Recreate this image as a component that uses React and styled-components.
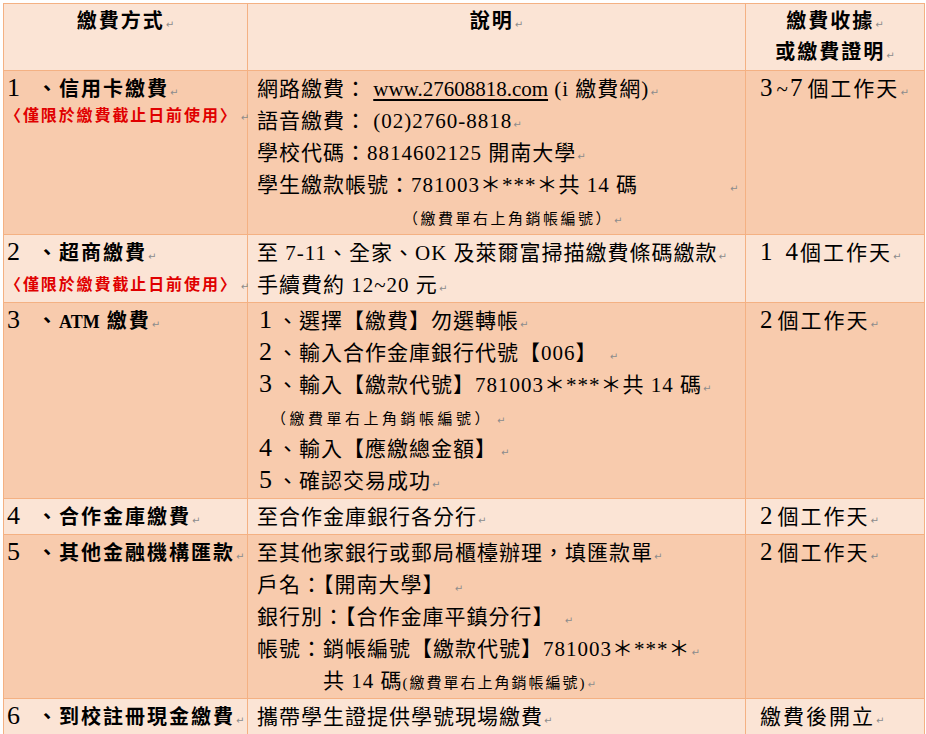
import React from "react";
import styled, { createGlobalStyle } from "styled-components";

const PALETTE = {
  BORDER: "#F4B183",
  LIGHT: "#FBE4D5",
  DARK: "#F8CBAD",
  RED: "#E00000",
  MARK: "#8c8c8c",
};

const GlobalStyle = createGlobalStyle`
  body {
    margin: 0;
    background: #fff;
  }
  #root {
    padding: 3px 0 0 3px;
  }
`;

const Table = styled.div`
  display: grid;
  grid-template-columns: 243px 497px 178px;
  gap: 1px;
  padding: 1px;
  width: max-content;
  background: ${PALETTE.BORDER};
  font-family: "Liberation Serif", "Noto Sans CJK TC", serif;
  color: #000;
`;

const Cell = styled.div`
  background: ${(props) => (props.dark ? PALETTE.DARK : PALETTE.LIGHT)};
  padding: 2px 0 1px ${(props) => props.left || 0}px;
  white-space: nowrap;
`;

const HeadCell = styled(Cell)`
  text-align: center;
  padding: 2px 0 2px 0;
  font-size: 20px;
  font-weight: 700;
  letter-spacing: 2px;
`;

const HeadLine = styled.div`
  height: 31px;
  line-height: 31px;
`;

const Label = styled.div`
  height: 32px;
  font-size: 20px;
  font-weight: 700;
  letter-spacing: 2px;
  line-height: 32px;
`;

const Warn = styled.div`
  color: ${PALETTE.RED};
  font-size: 16px;
  font-weight: 700;
  letter-spacing: 1.9px;
  height: ${(props) => (props.tall ? 32 : 22)}px;
  line-height: ${(props) => (props.tall ? 32 : 22)}px;
`;

const Line = styled.div`
  height: 32px;
  font-size: 21px;
  letter-spacing: 1px;
  line-height: 32px;
  padding-left: ${(props) => props.indent || 0}px;
`;

const Days = styled.div`
  height: 32px;
  font-size: 21px;
  letter-spacing: 2px;
  line-height: 32px;
`;

const Note = styled.span`
  font-size: 15px;
  line-height: 1;
  letter-spacing: ${(props) => props.ls || 2.5}px;
`;

const Idx = styled.span`
  display: inline-block;
  width: ${(props) => props.w || 20}px;
  padding-left: 2px;
  box-sizing: border-box;
  font-family: "Liberation Serif", serif;
  font-size: 26px;
  font-weight: 400;
  line-height: 1;
  letter-spacing: 0;
`;

const Big = styled.span`
  font-family: "Liberation Serif", serif;
  font-size: 25px;
  line-height: 1;
  letter-spacing: ${(props) => props.ls || 0}px;
`;

const Link = styled.span`
  text-decoration: underline;
  text-underline-offset: 3px;
  line-height: 1;
  letter-spacing: 0;
`;

const Latin = styled.span`
  font-weight: 700;
  font-size: 18px;
  line-height: 1;
  letter-spacing: 0;
`;

const MarkGlyph = styled.span`
  font-family: "DejaVu Sans", sans-serif;
  font-size: 10px;
  font-weight: 400;
  line-height: 1;
  color: ${PALETTE.MARK};
  letter-spacing: 0;
  margin-left: ${(props) => props.gap || 1}px;
`;

const Mark = ({ gap }) => <MarkGlyph gap={gap}>↵</MarkGlyph>;

const ROWS = [
  {
    dark: true,
    idx: "1",
    name: "信用卡繳費",
    warn: "short",
    desc: (
      <>
        <Line>
          網路繳費：&nbsp;<Link>www.27608818.com</Link> (i 繳費網)
          <Mark />
        </Line>
        <Line>
          語音繳費：&nbsp;(02)2760-8818
          <Mark />
        </Line>
        <Line>
          學校代碼：8814602125 開南大學
          <Mark />
        </Line>
        <Line>
          學生繳款帳號：781003＊***＊共 14 碼
          <Mark gap={92} />
        </Line>
        <Line indent={146}>
          <Note>（繳費單右上角銷帳編號）</Note>
          <Mark />
        </Line>
      </>
    ),
    days: (
      <>
        <Big ls={4}>3</Big>~<Big ls={5}>7</Big>個工作天
        <Mark />
      </>
    ),
  },
  {
    dark: false,
    idx: "2",
    name: "超商繳費",
    warn: "tall",
    desc: (
      <>
        <Line>
          至 7-11、全家、OK 及萊爾富掃描繳費條碼繳款
          <Mark />
        </Line>
        <Line>
          手續費約 12~20 元
          <Mark />
        </Line>
      </>
    ),
    days: (
      <>
        <Big ls={13}>1</Big>
        <Big ls={2}>4</Big>個工作天
        <Mark />
      </>
    ),
  },
  {
    dark: true,
    idx: "3",
    name: (
      <>
        <Latin>ATM</Latin> 繳費
      </>
    ),
    desc: (
      <>
        <Line>
          <Idx>1</Idx>、選擇【繳費】勿選轉帳
          <Mark />
        </Line>
        <Line>
          <Idx>2</Idx>、輸入合作金庫銀行代號【006】 <Mark gap={6} />
        </Line>
        <Line>
          <Idx>3</Idx>、輸入【繳款代號】781003＊***＊共 14 碼
          <Mark />
        </Line>
        <Line indent={14}>
          <Note ls={3.5}>（繳費單右上角銷帳編號）</Note>
          <Mark gap={4} />
        </Line>
        <Line>
          <Idx>4</Idx>、輸入【應繳總金額】
          <Mark gap={4} />
        </Line>
        <Line>
          <Idx>5</Idx>、確認交易成功
          <Mark />
        </Line>
      </>
    ),
    days: (
      <>
        <Big ls={5}>2</Big>個工作天
        <Mark />
      </>
    ),
  },
  {
    dark: false,
    idx: "4",
    name: "合作金庫繳費",
    desc: (
      <Line>
        至合作金庫銀行各分行
        <Mark />
      </Line>
    ),
    days: (
      <>
        <Big ls={5}>2</Big>個工作天
        <Mark />
      </>
    ),
  },
  {
    dark: true,
    idx: "5",
    name: "其他金融機構匯款",
    desc: (
      <>
        <Line>
          至其他家銀行或郵局櫃檯辦理，填匯款單
          <Mark />
        </Line>
        <Line>
          戶名：【開南大學】 <Mark gap={4} />
        </Line>
        <Line>
          銀行別：【合作金庫平鎮分行】 <Mark gap={4} />
        </Line>
        <Line>
          帳號：銷帳編號【繳款代號】781003＊***＊
          <Mark />
        </Line>
        <Line indent={66}>
          共 14 碼<Note ls={2}>(繳費單右上角銷帳編號)</Note>
          <Mark />
        </Line>
      </>
    ),
    days: (
      <>
        <Big ls={5}>2</Big>個工作天
        <Mark />
      </>
    ),
  },
  {
    dark: false,
    idx: "6",
    name: "到校註冊現金繳費",
    desc: (
      <Line>
        攜帶學生證提供學號現場繳費
        <Mark />
      </Line>
    ),
    days: (
      <>
        繳費後開立
        <Mark />
      </>
    ),
  },
];

const App = () => {
  return (
    <>
      <GlobalStyle />
      <Table>
        <HeadCell>
          <HeadLine>
            繳費方式
            <Mark />
          </HeadLine>
        </HeadCell>
        <HeadCell>
          <HeadLine>
            說明
            <Mark />
          </HeadLine>
        </HeadCell>
        <HeadCell>
          <HeadLine>
            繳費收據
            <Mark />
          </HeadLine>
          <HeadLine>
            或繳費證明
            <Mark />
          </HeadLine>
        </HeadCell>
        {ROWS.map((row) => (
          <React.Fragment key={row.idx}>
            <Cell dark={row.dark} left={1}>
              <Label>
                <Idx w={32}>{row.idx}</Idx>、{row.name}
                <Mark />
              </Label>
              {row.warn && (
                <Warn tall={row.warn === "tall"}>
                  〈僅限於繳費截止日前使用〉
                  <Mark gap={3} />
                </Warn>
              )}
            </Cell>
            <Cell dark={row.dark} left={9}>
              {row.desc}
            </Cell>
            <Cell dark={row.dark} left={14}>
              <Days>{row.days}</Days>
            </Cell>
          </React.Fragment>
        ))}
      </Table>
    </>
  );
};

export default App;
